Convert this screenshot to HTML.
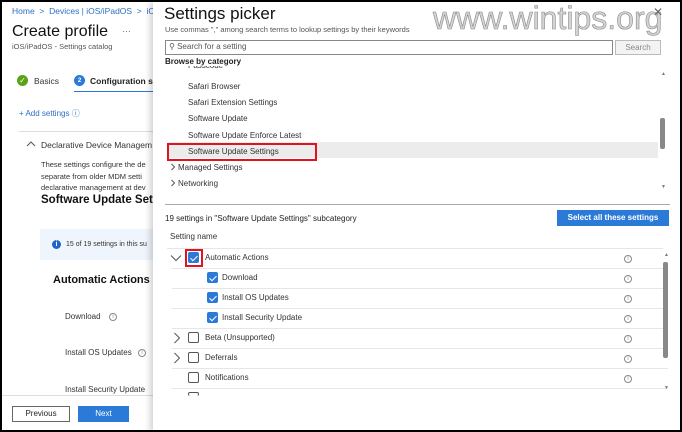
<!DOCTYPE html>
<html><head><meta charset="utf-8"><style>
*{margin:0;padding:0;box-sizing:border-box}
body{width:682px;height:432px;overflow:hidden;background:#000;font-family:"Liberation Sans",sans-serif;color:#222;position:relative}
#wrap{position:absolute;left:2px;top:2px;width:678px;height:428px;background:#fff;overflow:hidden}
.a{position:absolute;white-space:nowrap}
.s8{font-size:8px}
.blue{color:#2b6fc4}
.ck{position:absolute;width:11px;height:11px;border:1px solid #555;border-radius:2px;background:#fff}
.ck.on{background:#2b7ad8;border-color:#2b7ad8}
.ck.on:after{content:"";position:absolute;left:3px;top:1px;width:3px;height:6px;border:solid #fff;border-width:0 1px 1px 0;transform:rotate(45deg)}
.inf{position:absolute;width:8px;height:8px;border:1px solid #888;border-radius:50%;font-size:6px;color:#888;text-align:center;line-height:6px}
.rl{position:absolute;left:165px;width:496px;height:1px;background:#e6e6e6}
svg{position:absolute}
</style></head><body><div id="wrap">
<div class="a s8 blue" style="left:10px;top:4px;font-size:8.5px">Home &nbsp;&gt;&nbsp; Devices | iOS/iPadOS &nbsp;&gt;&nbsp; iO</div>
<div class="a" style="left:10px;top:21px;font-size:16px;color:#111">Create profile</div>
<div class="a" style="left:120px;top:22px;font-size:9px;color:#666">…</div>
<div class="a" style="left:10px;top:40px;font-size:7.5px;color:#555">iOS/iPadOS - Settings catalog</div>
<div class="a" style="left:15px;top:73px;width:11px;height:11px;border-radius:50%;background:#5ba316;color:#fff;font-size:8px;text-align:center;line-height:11px">✓</div>
<div class="a" style="left:32px;top:74px;font-size:8.5px;color:#333">Basics</div>
<div class="a" style="left:72px;top:73px;width:11px;height:11px;border-radius:50%;background:#2b7ad8;color:#fff;font-size:6.5px;font-weight:bold;text-align:center;line-height:11px">2</div>
<div class="a" style="left:88px;top:74px;font-size:8.5px;font-weight:bold;color:#222">Configuration se</div>
<div class="a" style="left:72px;top:89px;width:81px;height:1px;background:#2b7ad8"></div>
<div class="a s8 blue" style="left:17px;top:106px">+ Add settings ⓘ</div>
<div class="a" style="left:17px;top:129px;width:140px;height:1px;background:#ddd"></div>
<svg style="left:24px;top:138px" width="10" height="8"><path d="M1 6 L5 2 L9 6" stroke="#555" fill="none"/></svg>
<div class="a" style="left:39px;top:138px;font-size:8.5px;color:#333">Declarative Device Managem</div>
<div class="a" style="left:39px;top:157px;font-size:7.5px;color:#333;line-height:11.5px">These settings configure the de<br>separate from older MDM setti<br>declarative management at dev</div>
<div class="a" style="left:39px;top:192px;font-size:11.5px;font-weight:bold;color:#111">Software Update Sett</div>
<div class="a" style="left:38px;top:227px;width:120px;height:31px;background:#eff5fc"></div>
<div class="a" style="left:50px;top:238px;width:9px;height:9px;border-radius:50%;background:#1f65c8;color:#fff;font-size:7px;text-align:center;line-height:9px;font-weight:bold">i</div>
<div class="a" style="left:64px;top:239px;font-size:7px;color:#333">15 of 19 settings in this su</div>
<div class="a" style="left:51px;top:272px;font-size:11px;font-weight:bold;color:#111">Automatic Actions</div>
<div class="a" style="left:63px;top:310px;font-size:8px;color:#333">Download</div>
<div class="inf" style="left:107px;top:311px">i</div>
<div class="a" style="left:63px;top:346px;font-size:8px;color:#333">Install OS Updates</div>
<div class="inf" style="left:136px;top:347px">i</div>
<div class="a" style="left:63px;top:383px;font-size:8px;color:#333">Install Security Update</div>
<div class="a" style="left:0;top:393px;width:160px;height:1px;background:#ddd"></div>
<div class="a" style="left:10px;top:404px;width:58px;height:16px;border:1px solid #666;font-size:8px;text-align:center;line-height:14px;color:#222">Previous</div>
<div class="a" style="left:76px;top:404px;width:51px;height:16px;background:#2b7ad8;color:#fff;font-size:8px;text-align:center;line-height:16px">Next</div>
<div class="a" style="left:151px;top:0;width:530px;height:430px;background:#fff;box-shadow:-3px 0 6px rgba(0,0,0,.18)"></div>
<div class="a" style="left:162px;top:2px;font-size:17px;color:#111">Settings picker</div>
<div class="a" style="left:163px;top:23px;font-size:7.5px;color:#555">Use commas "," among search terms to lookup settings by their keywords</div>
<div class="a" style="left:431px;top:-2px;font-size:32px;color:#d4d4d4;-webkit-text-stroke:0.6px #8a8a8a">www.wintips.org</div>
<div class="a" style="left:651px;top:3px;font-size:12px;color:#666">✕</div>
<div class="a" style="left:163px;top:38px;width:448px;height:15px;border:1px solid #888"></div>
<div class="a" style="left:167px;top:40px;font-size:8px;color:#555">⚲ Search for a setting</div>
<div class="a" style="left:613px;top:38px;width:46px;height:15px;border:1px solid #bbb;background:#f3f3f3;font-size:8px;color:#888;text-align:center;line-height:13px">Search</div>
<div class="a" style="left:163px;top:55px;font-size:8px;font-weight:bold;color:#222">Browse by category</div>
<div class="a" style="left:186px;top:64px;height:5px;overflow:hidden;font-size:8px;color:#333"><div style="margin-top:-5px">Passcode</div></div>
<div class="a" style="left:166px;top:140px;width:490px;height:16px;background:#ececec"></div>
<div class="a" style="left:186px;top:77px;font-size:8px;color:#333;line-height:16.2px">Safari Browser<br>Safari Extension Settings<br>Software Update<br>Software Update Enforce Latest<br>Software Update Settings</div>
<div class="a" style="left:165px;top:141px;width:150px;height:18px;border:2px solid #e0141e"></div>
<svg style="left:168px;top:161px" width="6" height="8"><path d="M1.5 1 L4.5 4 L1.5 7" stroke="#555" fill="none"/></svg>
<svg style="left:168px;top:177px" width="6" height="8"><path d="M1.5 1 L4.5 4 L1.5 7" stroke="#555" fill="none"/></svg>
<div class="a" style="left:176px;top:158px;font-size:8px;color:#333;line-height:16.2px">Managed Settings<br>Networking</div>
<div class="a" style="left:659px;top:69px;font-size:5px;color:#777">▲</div>
<div class="a" style="left:659px;top:182px;font-size:5px;color:#777">▼</div>
<div class="a" style="left:658px;top:116px;width:5px;height:31px;background:#888;border-radius:2px"></div>
<div class="a" style="left:163px;top:202px;width:505px;height:1px;background:#aaa"></div>
<div class="a" style="left:163px;top:212px;font-size:8px;color:#222">19 settings in "Software Update Settings" subcategory</div>
<div class="a" style="left:555px;top:208px;width:112px;height:16px;background:#2b7ad8;color:#fff;font-size:8px;font-weight:bold;text-align:center;line-height:16px">Select all these settings</div>
<div class="a" style="left:168px;top:230px;font-size:8px;color:#333">Setting name</div>
<div class="rl" style="top:246px"></div>
<div class="rl" style="top:266px;left:170px"></div><div class="rl" style="top:286px;left:170px"></div><div class="rl" style="top:306px;left:170px"></div><div class="rl" style="top:326px;left:170px"></div><div class="rl" style="top:346px;left:170px"></div><div class="rl" style="top:366px;left:170px"></div><div class="rl" style="top:386px;left:170px"></div>
<svg style="left:168px;top:252px" width="12" height="8"><path d="M1 1.5 L6 6.5 L11 1.5" stroke="#555" fill="none"/></svg>
<div class="a" style="left:183px;top:247px;width:18px;height:18px;border:2px solid #e0141e"></div>
<div class="ck on" style="left:186px;top:250px"></div>
<div class="a s8" style="left:203px;top:251px;color:#333">Automatic Actions</div>
<div class="ck on" style="left:205px;top:270px"></div><div class="a s8" style="left:220px;top:271px;color:#333">Download</div>
<div class="ck on" style="left:205px;top:290px"></div><div class="a s8" style="left:220px;top:291px;color:#333">Install OS Updates</div>
<div class="ck on" style="left:205px;top:310px"></div><div class="a s8" style="left:220px;top:311px;color:#333">Install Security Update</div>
<svg style="left:171px;top:330px" width="8" height="12"><path d="M1.5 1 L6.5 6 L1.5 11" stroke="#555" fill="none"/></svg>
<div class="ck" style="left:186px;top:330px"></div><div class="a s8" style="left:203px;top:331px;color:#333">Beta (Unsupported)</div>
<svg style="left:171px;top:350px" width="8" height="12"><path d="M1.5 1 L6.5 6 L1.5 11" stroke="#555" fill="none"/></svg>
<div class="ck" style="left:186px;top:350px"></div><div class="a s8" style="left:203px;top:351px;color:#333">Deferrals</div>
<div class="ck" style="left:186px;top:370px"></div><div class="a s8" style="left:203px;top:371px;color:#333">Notifications</div>
<div class="ck" style="left:186px;top:390px;height:4px;border-bottom:none"></div>
<div class="inf" style="left:622px;top:253px">i</div><div class="inf" style="left:622px;top:273px">i</div><div class="inf" style="left:622px;top:293px">i</div><div class="inf" style="left:622px;top:313px">i</div><div class="inf" style="left:622px;top:333px">i</div><div class="inf" style="left:622px;top:353px">i</div><div class="inf" style="left:622px;top:373px">i</div>
<div class="a" style="left:662px;top:250px;font-size:5px;color:#777">▲</div>
<div class="a" style="left:662px;top:383px;font-size:5px;color:#777">▼</div>
<div class="a" style="left:661px;top:260px;width:5px;height:96px;background:#888;border-radius:2px"></div>
</div></body></html>
